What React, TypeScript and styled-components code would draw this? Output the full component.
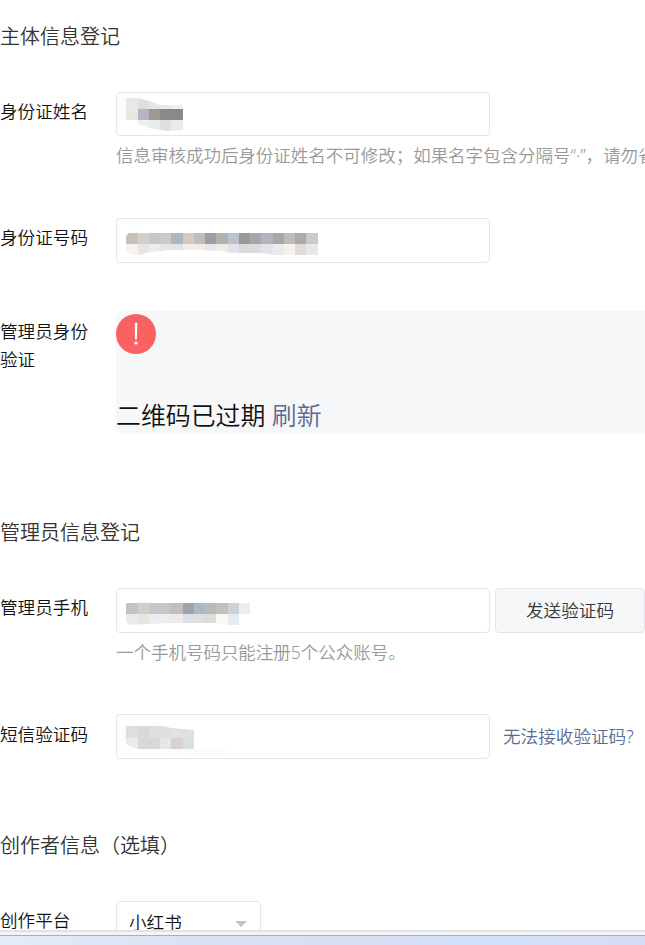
import { useState } from 'react'
import styled, { createGlobalStyle } from 'styled-components'

const GlobalStyle = createGlobalStyle`
    * {
        box-sizing: border-box;
    }

    body {
        margin: 0;
        background-color: #fff;
        font-family: "Noto Sans", "Noto Sans CJK SC", sans-serif;
        font-size: 17.6px;
        font-weight: 350;
        line-height: 28px;
        color: #111;
    }
`

const Page = styled.div`
    display: flex;
    flex-direction: column;
    width: 645px;
    height: 945px;
    overflow: hidden;
`
const Content = styled.main`
    flex: 1;
    min-height: 0;
    padding-top: 22px;
    overflow: hidden;
    white-space: nowrap;
`
const Section = styled.section<{ $gap: number }>`
    margin-bottom: ${props => props.$gap}px;
`
const Title = styled.h2`
    margin: 0;
    padding: 1px 0 41px;
    font-size: 20px;
    font-weight: 350;
    line-height: 28px;
    color: #333;
`
const Row = styled.div<{ $gap?: number }>`
    display: flex;
    align-items: flex-start;
    margin-bottom: ${props => props.$gap ?? 0}px;
`
const Label = styled.label<{ $top?: number }>`
    flex: none;
    width: 116px;
    padding: ${props => props.$top ?? 5}px 26px 0 0;
    white-space: normal;
`
const Field = styled.div`
    flex: 1;
    min-width: 0;
`
const Controls = styled.div`
    display: flex;
    align-items: center;
`
const InputBox = styled.div<{ $height?: number }>`
    flex: none;
    width: 374px;
    height: ${props => props.$height ?? 45}px;
    border: 1px solid #e4e5e8;
    border-radius: 4px;
    background-color: #fff;

    svg {
        display: block;
    }
`
const Hint = styled.p`
    margin: 5px 0 1px;
    font-size: 17.5px;
    letter-spacing: -0.02px;
    color: #999;
`
const SendButton = styled.button`
    flex: none;
    width: 150px;
    height: 45px;
    margin-left: 5px;
    padding: 0 0 2px;
    border: 1px solid #e4e5e8;
    border-radius: 4px;
    background-color: #f6f7f9;
    font: inherit;
    color: #353535;
    cursor: pointer;
`
const Link = styled.a`
    color: #576b95;
    cursor: pointer;
`
const HelpLink = styled(Link)`
    margin-left: 13px;
    padding-bottom: 2px;
`
const QrPanel = styled.div`
    flex: none;
    display: flex;
    flex-direction: column;
    justify-content: space-between;
    width: 640px;
    height: 123px;
    padding: 3px 0 1px;
    border-radius: 8px;
    background-color: #f6f7f9;

    svg {
        display: block;
    }
`
const QrMessage = styled.p`
    margin: 0;
    font-size: 24.9px;
    line-height: 36px;
`
const Select = styled.div`
    display: flex;
    align-items: center;
    justify-content: space-between;
    width: 145px;
    height: 45px;
    padding: 0 13px 0 12px;
    border: 1px solid #e4e5e8;
    border-radius: 4px;
    cursor: pointer;
`
const SelectValue = styled.span`
    padding-bottom: 4px;
`
const BottomBar = styled.footer`
    flex: none;
    height: 15px;
    border-top: 2px solid #e3e3e3;
    background-color: #f4f4f4;
    padding-top: 3px;
`
const Desktop = styled.div`
    height: 10px;
    border-top: 1px solid #a9afbd;
    background: linear-gradient(90deg, #e1edf7 0, #d9e3f6 180px, #d6def4 380px, #d0e1fa 480px, #d4e0f8 560px, #d6dcf3 645px);
`

type MosaicRow = { y: number; height: number; start?: number; colors: string[] }

type MosaicProps = {
    id: string
    xs: number[]
    rows: MosaicRow[]
    outline: string
    haze?: string
}

// Masked input value, drawn as blocks cut by a brush outline
const Mosaic = ({ id, xs, rows, outline, haze }: MosaicProps) => (
    <svg width='250' height='42' viewBox='0 0 250 42' shapeRendering='crispEdges'>
        <clipPath id={id}><path d={outline} /></clipPath>
        {haze && <path d={haze} fill='#fcfcfc' />}
        <g clipPath={`url(#${id})`}>
            {rows.map(row => row.colors.map((color, i) => {
                const n = i + (row.start ?? 0)
                return <rect key={`${row.y}-${n}`} x={xs[n]} y={row.y} width={xs[n + 1] - xs[n]} height={row.height} fill={color} />
            }))}
        </g>
    </svg>
)

const NameMosaic = () => (
    <Mosaic
        id='name'
        xs={[9, 21, 32, 43, 54, 66]}
        rows={[
            { y: 5, height: 11, colors: ['#e8e8e6', '#dedfe0', '#e5e5e5', '#e8e8e9', '#eeefef'] },
            { y: 16, height: 11, colors: ['#e5e8df', '#b4b5c0', '#a0978f', '#868a8d', '#868a8d'] },
            { y: 27, height: 11, start: 1, colors: ['#eeeff2', '#e9ebed', '#dededf', '#ebebec'] }
        ]}
        outline='M9 5H21L32 8L43 12H66V37L50 38L32 35L21 31V27H9Z'
        haze='M0 7L9 3V27H0Z'
    />
)

const IdMosaic = () => (
    <Mosaic
        id='idcard'
        xs={[9, 21, 32, 43, 54, 66, 77, 88, 99, 111, 122, 133, 144, 156, 167, 178, 189, 201]}
        rows={[
            {
                y: 14, height: 11,
                colors: ['#c9c0b9', '#d0d1cc', '#c5c7ca', '#c8cac9', '#adb7be', '#d4cac3', '#c1bcb6', '#989fa6', '#b4b2ac', '#bac3ce', '#999999', '#a9a5a5', '#b1b5c0', '#a9a8a7', '#c0bbb8', '#b0aaa5', '#cbcacd']
            },
            {
                y: 25, height: 11,
                colors: ['#f7f3f0', '#e6e5e5', '#eaedef', '#e5e5e5', '#e4e5e6', '#f5ece6', '#f0ebe7', '#e6e6e9', '#eeecea', '#e1e3e6', '#d9dbda', '#dadcdf', '#e4e5eb', '#ecebea', '#f5f1ed', '#e0dbd9', '#e6e9e9']
            }
        ]}
        outline='M12 14H201V36H157L144 34H115L105 32L87 31H50L29 34L24 36H14L9 31V17Z'
    />
)

const PhoneMosaic = () => (
    <Mosaic
        id='phone'
        xs={[9, 21, 32, 43, 54, 66, 77, 88, 99, 111, 122, 133]}
        rows={[
            {
                y: 14, height: 11,
                colors: ['#c3c3c1', '#cfd0cb', '#c4c6c8', '#c5c6c5', '#c0bfbe', '#9da3b0', '#adb8c2', '#babab8', '#c5c0b9', '#cdd2d7', '#e8edf0']
            },
            {
                y: 25, height: 11,
                colors: ['#ebebeb', '#e6e5e4', '#ecedf2', '#ebedef', '#edeae8', '#dae0e4', '#dedfe1', '#dcdcdd', '#f8f9f5', '#e6ebef']
            }
        ]}
        outline='M10 14H133V25H122V36H113L99 34H55L30 35L14 36L9 33V15Z'
    />
)

const CodeMosaic = () => (
    <Mosaic
        id='code'
        xs={[9, 21, 32, 43, 54, 66, 77]}
        rows={[
            { y: 11, height: 12, colors: ['#dfdedc', '#d8dad8', '#dfdfdd', '#dfdfdd', '#e0e1e3', '#dce0e4'] },
            { y: 23, height: 11, colors: ['#e9ebf0', '#d9d8d8', '#d4d8d7', '#e5e6e6', '#d5d3d2', '#dadfe2'] }
        ]}
        outline='M9 11H47L54 13L77 15V34H21L12 31L9 29Z'
        haze='M5 14L9 11V29H5ZM35 34H112L108 41H85L35 35Z'
    />
)

const App = () => {

    const [platform] = useState('小红书')

    return (
        <Page>
            <GlobalStyle />
            <Content>
                <Section $gap={84}>
                    <Title>主体信息登记</Title>
                    <Row $gap={48}>
                        <Label>身份证姓名</Label>
                        <Field>
                            <InputBox $height={44}><NameMosaic /></InputBox>
                            <Hint>信息审核成功后身份证姓名不可修改；如果名字包含分隔号“·”，请勿省略。</Hint>
                        </Field>
                    </Row>
                    <Row $gap={48}>
                        <Label>身份证号码</Label>
                        <InputBox><IdMosaic /></InputBox>
                    </Row>
                    <Row>
                        <Label $top={6}>管理员身份验证</Label>
                        <QrPanel>
                            <svg width='40' height='40' viewBox='0 0 40 40'>
                                <circle cx='20' cy='20' r='20' fill='#fa6163' />
                                <path d='M18.7 8.7H21.3L20.9 25.5H19.1Z' fill='#fff' />
                                <circle cx='20' cy='29' r='1.6' fill='#fff' />
                            </svg>
                            <QrMessage>二维码已过期 <Link>刷新</Link></QrMessage>
                        </QrPanel>
                    </Row>
                </Section>
                <Section $gap={72}>
                    <Title>管理员信息登记</Title>
                    <Row $gap={47}>
                        <Label>管理员手机</Label>
                        <Field>
                            <Controls>
                                <InputBox><PhoneMosaic /></InputBox>
                                <SendButton>发送验证码</SendButton>
                            </Controls>
                            <Hint>一个手机号码只能注册5个公众账号。</Hint>
                        </Field>
                    </Row>
                    <Row>
                        <Label $top={6}>短信验证码</Label>
                        <Controls>
                            <InputBox><CodeMosaic /></InputBox>
                            <HelpLink>无法接收验证码?</HelpLink>
                        </Controls>
                    </Row>
                </Section>
                <Section $gap={0}>
                    <Title>创作者信息（选填）</Title>
                    <Row>
                        <Label>创作平台</Label>
                        <Select>
                            <SelectValue>{platform}</SelectValue>
                            <svg width='12' height='6' viewBox='0 0 12 6'>
                                <path d='M0 0H12L6 6Z' fill='#c2c2c2' />
                            </svg>
                        </Select>
                    </Row>
                </Section>
            </Content>
            <BottomBar><Desktop /></BottomBar>
        </Page>
    )
}

export default App
